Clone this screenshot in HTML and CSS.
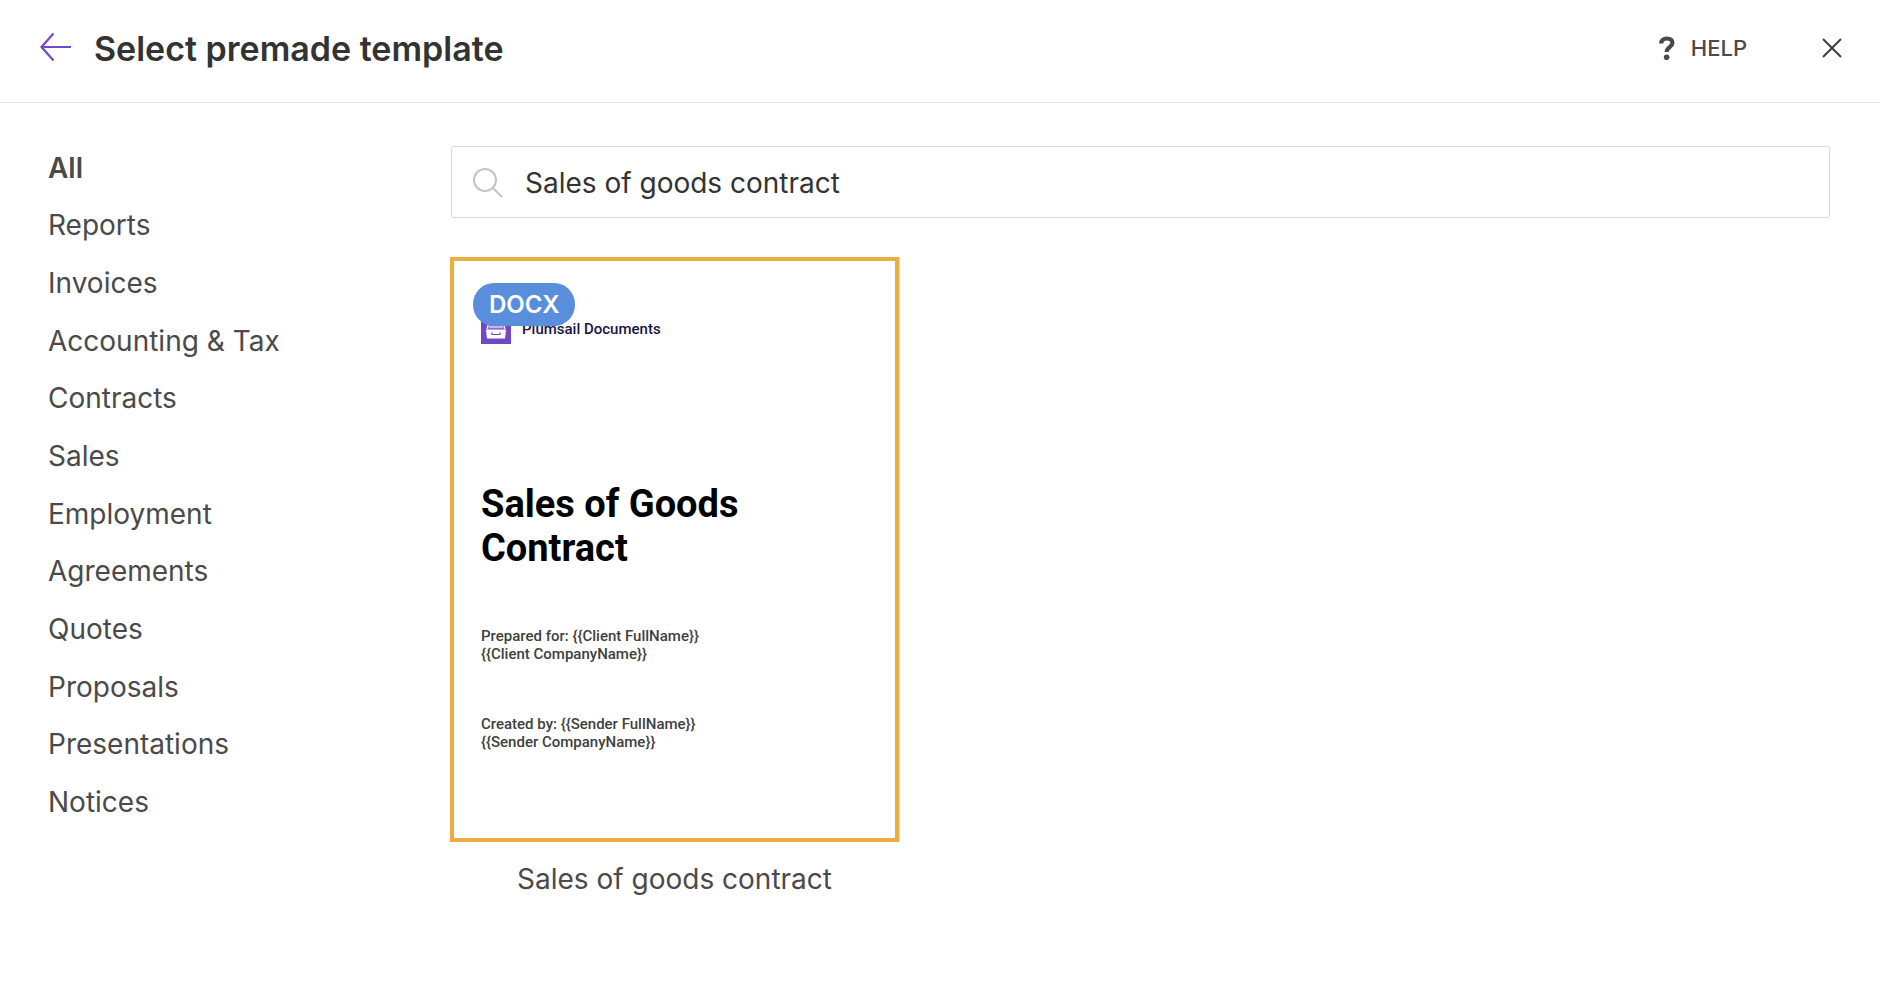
FILE: index.html
```html
<!DOCTYPE html>
<html lang="en">
<head>
    <meta charset="UTF-8">
    <meta name="viewport" content="width=device-width, initial-scale=1.0">
    <title>Select premade template</title>
    <link rel="stylesheet" href="styles.css">
</head>
<body>
    <header class="header">
        <button class="icon-button back" type="button" aria-label="Back">
            <svg width="34" height="32" viewBox="0 0 34 32" fill="none" stroke="#7248c5" stroke-width="2.2">
                <path d="M32 15H3M14.500 1.500L2.500 15l12 13.500"/>
            </svg>
        </button>
        <h1>Select premade template</h1>
        <a class="help" href="#">
            <svg width="16" height="24" viewBox="0 0 16 24" fill="none">
                <path d="M2.200 7.500C2.200 4.300 4.400 2.500 7.800 2.500s5.600 1.600 5.600 4.400c0 4.200-5.800 4.200-5.800 9.200" stroke="#4a4a4a" stroke-width="4.200"/>
                <circle cx="7.600" cy="21.200" r="2.800" fill="#4a4a4a"/>
            </svg>
            HELP
        </a>
        <button class="icon-button close" type="button" aria-label="Close">
            <svg width="20" height="20" viewBox="0 0 20 20" fill="none" stroke="#3d3d3d" stroke-width="2">
                <path d="M1 1l18 18M19 1L1 19"/>
            </svg>
        </button>
    </header>
    <div class="container">
        <nav class="categories">
            <a class="active" href="#">All</a>
            <a href="#">Reports</a>
            <a href="#">Invoices</a>
            <a href="#">Accounting &amp; Tax</a>
            <a href="#">Contracts</a>
            <a href="#">Sales</a>
            <a href="#">Employment</a>
            <a href="#">Agreements</a>
            <a href="#">Quotes</a>
            <a href="#">Proposals</a>
            <a href="#">Presentations</a>
            <a href="#">Notices</a>
        </nav>
        <main class="content">
            <div class="search">
                <label for="search" aria-label="Search templates">
                    <svg width="30" height="30" viewBox="0 0 30 30" fill="none" stroke="#c4c4c4" stroke-width="2">
                        <circle cx="12" cy="12" r="11"/>
                        <path d="M20 20l9 9"/>
                    </svg>
                </label>
                <input type="text" id="search" value="Sales of goods contract">
            </div>
            <div class="templates">
                <a class="template" href="#">
                    <div class="preview">
                        <span class="badge">DOCX</span>
                        <div class="brand">
                            <svg width="30" height="30" viewBox="0 0 30 30">
                                <rect width="30" height="30" fill="#7248c5"/>
                                <path d="M9 6h12l3 9H6z" fill="#8d6bd0"/>
                                <path d="M8 8L6 15M22 8l2 7M9 10h12M8 13h14" fill="none" stroke="#fff" stroke-width="1.200"/>
                                <path d="M5 15.500h20l-1 9H6z" fill="#fff"/>
                                <path d="M11 18.500v2h8v-2" fill="none" stroke="#7248c5" stroke-width="1.200"/>
                            </svg>
                            Plumsail Documents
                        </div>
                        <h2>Sales of Goods<br>Contract</h2>
                        <p>Prepared for: {{Client FullName}}<br>{{Client CompanyName}}</p>
                        <p>Created by: {{Sender FullName}}<br>{{Sender CompanyName}}</p>
                    </div>
                    <div class="template-name">Sales of goods contract</div>
                </a>
            </div>
        </main>
    </div>
</body>
</html>
```

FILE: styles.css
```css
* {
    box-sizing: border-box;
}
body {
    font-family: Inter, "Liberation Sans", sans-serif;
    margin: 0;
    background-color: #fff;
    color: #4a4a4a;
}
a {
    color: inherit;
    text-decoration: none;
}
svg {
    display: block;
}
.header {
    display: flex;
    align-items: center;
    height: 103px;
    padding: 0 38px 6px 39px;
    border-bottom: 1px solid #e8e8e8;
}
.header h1 {
    margin: 0 auto 0 21px;
    font-size: 34px;
    font-weight: 600;
    color: #333;
}
.icon-button {
    padding: 0;
    border: 0;
    background: none;
    cursor: pointer;
}
.help {
    display: flex;
    align-items: center;
    gap: 16px;
    margin-right: 75px;
    font-size: 22px;
    font-weight: 500;
}
.container {
    display: grid;
    grid-template-columns: 450px 1fr;
    padding: 36px 50px 40px 0;
}
.categories {
    display: grid;
    grid-auto-rows: 1fr;
    align-items: center;
    height: 692px;
    padding-left: 48px;
    font-size: 28px;
}
.categories .active {
    font-weight: 600;
}
.content {
    padding-top: 7px;
}
.search {
    display: flex;
    align-items: center;
    gap: 22px;
    height: 72px;
    margin-left: 1px;
    padding: 1px 21px 0;
    border: 1px solid #d8d8d8;
    border-radius: 3px;
}
.search input {
    flex: 1;
    padding: 0;
    border: 0;
    outline: none;
    font-family: inherit;
    font-size: 28px;
    color: #333;
}
.templates {
    display: flex;
    flex-wrap: wrap;
    gap: 40px;
    margin-top: 39px;
}
.template {
    width: 449px;
}
.preview {
    position: relative;
    height: 585px;
    padding: 53px 27px 0;
    border: 4px solid #ecae40;
    box-shadow: 1px 0 0 #e0e0e0;
    font-family: Roboto, sans-serif;
}
.badge {
    position: absolute;
    top: 22px;
    left: 19px;
    padding: 0 16px;
    border-radius: 21px;
    background-color: #588edb;
    color: #fff;
    font-family: Inter, sans-serif;
    font-size: 24px;
    font-weight: 600;
    line-height: 43px;
}
.brand {
    display: flex;
    align-items: center;
    gap: 11px;
    font-size: 15px;
    font-weight: 500;
    color: #21123f;
}
.preview h2 {
    margin: 138px 0 57px;
    font-size: 38px;
    font-weight: 700;
    line-height: 44px;
    color: #000;
}
.preview p {
    margin: 0 0 52px;
    font-size: 15px;
    font-weight: 500;
    line-height: 18px;
    color: #404040;
}
.template-name {
    margin-top: 20px;
    font-size: 28px;
    text-align: center;
}
```
